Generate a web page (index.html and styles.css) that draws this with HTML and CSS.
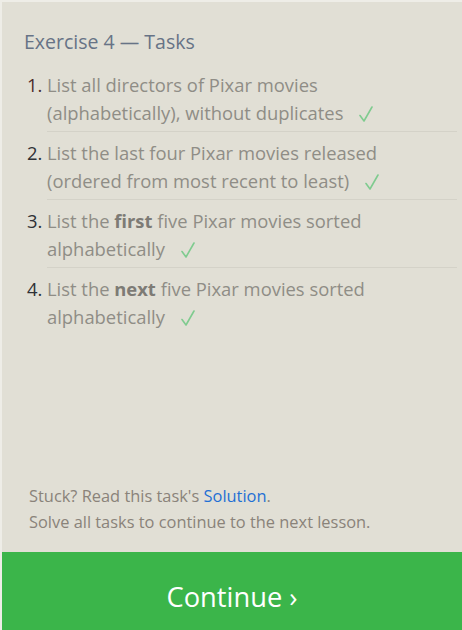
FILE: index.html
```html
<!DOCTYPE html>
<html>
<head>
<meta charset="utf-8">
<link rel="stylesheet" href="styles.css">
</head>
<body>
<div class="panel">
  <div class="content">
    <h2 class="title">Exercise 4 — Tasks</h2>
    <ol class="tasks">
      <li class="task"><span class="num first">1.</span><span class="text">List all directors of Pixar movies (alphabetically), without duplicates <svg class="check" width="14" height="16" viewBox="0 0 14 16"><path d="M1 9.5 L5 15 L13 1" /></svg></span></li>
      <li class="task"><span class="num">2.</span><span class="text">List the last four Pixar movies released (ordered from most recent to least) <svg class="check" width="14" height="16" viewBox="0 0 14 16"><path d="M1 9.5 L5 15 L13 1" /></svg></span></li>
      <li class="task"><span class="num">3.</span><span class="text">List the <b>first</b> five Pixar movies sorted alphabetically <svg class="check" width="14" height="16" viewBox="0 0 14 16"><path d="M1 9.5 L5 15 L13 1" /></svg></span></li>
      <li class="task"><span class="num">4.</span><span class="text">List the <b>next</b> five Pixar movies sorted alphabetically <svg class="check" width="14" height="16" viewBox="0 0 14 16"><path d="M1 9.5 L5 15 L13 1" /></svg></span></li>
    </ol>
  </div>
  <div class="footer">
    <div>Stuck? Read this task's <a class="link" href="#">Solution</a>.</div>
    <div>Solve all tasks to continue to the next lesson.</div>
  </div>
  <div class="continue">Continue ›</div>
</div>
</body>
</html>
```
FILE: styles.css
```css
html, body {
  margin: 0;
  padding: 0;
  height: 630px;
  overflow: hidden;
  background: #e1dfd5;
}
.panel {
  height: 630px;
  box-sizing: border-box;
  border-top: 2px solid #eeede7;
  border-left: 2px solid #eeede7;
  display: flex;
  flex-direction: column;
  font-family: "Open Sans", sans-serif;
}
.content {
  flex: 1;
  padding: 0 5px 0 22px;
}
.title {
  margin: 0;
  padding-top: 27px;
  font-size: 19.5px;
  line-height: 26px;
  font-weight: 400;
  color: #677386;
}
.tasks {
  list-style: none;
  margin: 0;
  padding: 0;
  padding-top: 16px;
}
.task {
  display: flex;
  font-size: 18.4px;
  line-height: 28px;
  color: #8f8d86;
}
.num {
  width: 23px;
  padding-left: 3px;
  box-sizing: border-box;
  color: #2f3136;
  flex: none;
}
.num.first { color: #4a2a2a; }
.text {
  flex: 1;
  padding-right: 12px;
  padding-bottom: 4px;
  margin-bottom: 7px;
  border-bottom: 1px solid #d4d2c8;
}
.task:last-child .text { border-bottom: none; }
.text b { color: #7d7b75; }
.check {
  margin-left: 11px;
  vertical-align: -2px;
  fill: none;
  stroke: #7fcb8f;
  stroke-width: 1.6;
  stroke-linecap: round;
  stroke-linejoin: round;
}
.footer {
  padding: 0 0 17px 27px;
  font-size: 16.4px;
  line-height: 26px;
  color: #8a837a;
}
.link {
  color: #1f6fd4;
  text-decoration: none;
}
.continue {
  height: 78px;
  box-sizing: border-box;
  padding-top: 10px;
  background: #3bb54a;
  color: #ffffff;
  font-size: 27.3px;
  display: flex;
  align-items: center;
  justify-content: center;
}
```
